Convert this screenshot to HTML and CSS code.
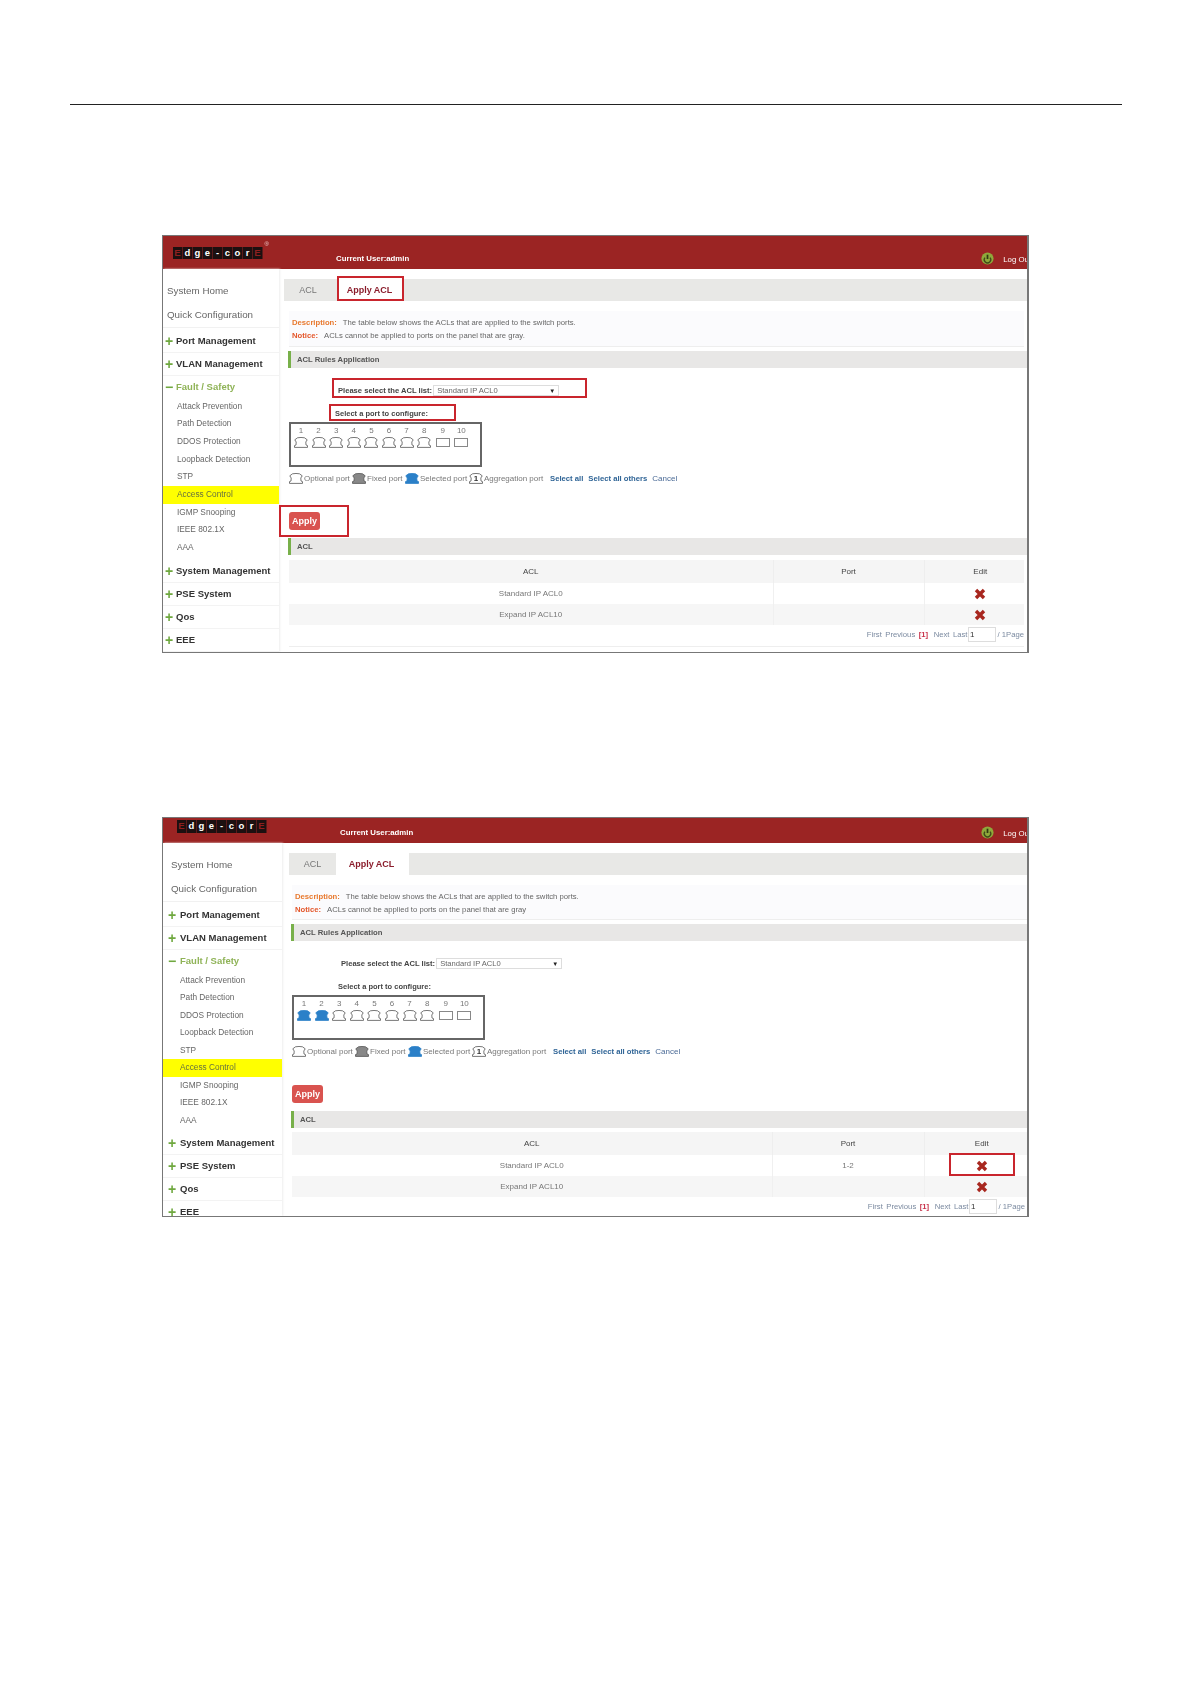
FILE: index.html
```html
<!DOCTYPE html>
<html lang="en">
<head>
<meta charset="utf-8">
<title>Apply ACL</title>
<link rel="stylesheet" href="styles.css">
</head>
<body>
<svg class="defs" width="0" height="0" aria-hidden="true">
  <symbol id="port" viewBox="0 0 14 11"><path d="M3.5 .8 Q7 .1 10.5 .8 L13.2 2.8 L11.8 5 L12 8 L13.5 8.6 V10.4 H.5 V8.6 L2 8 L2.2 5 L.8 2.8 Z"/></symbol>
  <symbol id="cross" viewBox="0 0 12 12"><path d="M2 2 L10 10 M10 2 L2 10"/></symbol>
  <symbol id="power" viewBox="0 0 12 12"><circle cx="6" cy="6" r="5.6" fill="#8fa83b"/><path d="M6 2.5 V6.5" stroke="#2f3a12" stroke-width="1.6"/><path d="M3.6 5.2 A3 3 0 1 0 8.4 5.2" fill="none" stroke="#3f4a18" stroke-width="1.2"/></symbol>
</svg>
<main class="page">
  <hr class="rule">

  <section class="shot shot-one">
    <header class="top">
      <div class="logo"><span class="red">E</span><span>d</span><span>g</span><span>e</span><span>-</span><span>c</span><span>o</span><span>r</span><span class="red">E</span><i class="reg">®</i></div>
      <div class="user">Current User:admin</div>
      <div class="logout"><svg class="power"><use href="#power"/></svg><span>Log Out</span></div>
    </header>
    <div class="body">
      <nav class="nav">
        <a class="plain">System Home</a>
        <a class="plain second">Quick Configuration</a>
        <a class="group first"><b>+</b>Port Management</a>
        <a class="group"><b>+</b>VLAN Management</a>
        <a class="group open"><b>−</b>Fault / Safety</a>
        <a class="sub">Attack Prevention</a>
        <a class="sub">Path Detection</a>
        <a class="sub">DDOS Protection</a>
        <a class="sub">Loopback Detection</a>
        <a class="sub">STP</a>
        <a class="sub active">Access Control</a>
        <a class="sub">IGMP Snooping</a>
        <a class="sub">IEEE 802.1X</a>
        <a class="sub">AAA</a>
        <a class="group after"><b>+</b>System Management</a>
        <a class="group"><b>+</b>PSE System</a>
        <a class="group"><b>+</b>Qos</a>
        <a class="group"><b>+</b>EEE</a>
      </nav>
      <div class="main">
        <div class="tabs"><span class="tab">ACL</span><span class="tab on">Apply ACL</span></div>
        <div class="desc">
          <p><b class="d">Description:</b>The table below shows the ACLs that are applied to the switch ports.</p>
          <p><b class="n">Notice:</b>ACLs cannot be applied to ports on the panel that are gray.</p>
        </div>
        <h3 class="bar rules">ACL Rules Application</h3>
        <div class="select-row"><span>Please select the ACL list:</span><div class="select">Standard IP ACL0<i>▼</i></div></div>
        <div class="port-label">Select a port to configure:</div>
        <div class="panel">
          <div class="pt"><span>1</span><svg class="p opt"><use href="#port"/></svg></div>
          <div class="pt"><span>2</span><svg class="p opt"><use href="#port"/></svg></div>
          <div class="pt"><span>3</span><svg class="p opt"><use href="#port"/></svg></div>
          <div class="pt"><span>4</span><svg class="p opt"><use href="#port"/></svg></div>
          <div class="pt"><span>5</span><svg class="p opt"><use href="#port"/></svg></div>
          <div class="pt"><span>6</span><svg class="p opt"><use href="#port"/></svg></div>
          <div class="pt"><span>7</span><svg class="p opt"><use href="#port"/></svg></div>
          <div class="pt"><span>8</span><svg class="p opt"><use href="#port"/></svg></div>
          <div class="pt sfp"><span>9</span><em></em></div>
          <div class="pt sfp"><span>10</span><em></em></div>
        </div>
        <div class="legend">
          <svg class="p opt"><use href="#port"/></svg><span class="lt w1">Optional port</span>
          <svg class="p fix"><use href="#port"/></svg><span class="lt w2">Fixed port</span>
          <svg class="p sel"><use href="#port"/></svg><span class="lt w3">Selected port</span>
          <span class="agg"><svg class="p opt"><use href="#port"/></svg><b>1</b></span><span class="lt w4">Aggregation port</span>
          <a class="lk strong">Select all</a><a class="lk strong">Select all others</a><a class="lk">Cancel</a>
        </div>
        <button class="apply" type="button">Apply</button>
        <h3 class="bar acl">ACL</h3>
        <table class="grid">
          <thead><tr><th class="c1">ACL</th><th class="c2">Port</th><th class="c3">Edit</th></tr></thead>
          <tbody>
            <tr><td>Standard IP ACL0</td><td></td><td class="c3"><svg class="x"><use href="#cross"/></svg></td></tr>
            <tr class="alt"><td>Expand IP ACL10</td><td></td><td class="c3"><svg class="x"><use href="#cross"/></svg></td></tr>
          </tbody>
        </table>
        <div class="pager"><span>First</span><span>Previous</span><b>[1]</b><span>Next</span><span>Last</span><input class="pg" value="1" aria-label="Page"><span>/ 1Page</span></div>
      </div>
    </div>
    <span class="mark m-tab"></span><span class="mark m-select"></span><span class="mark m-port"></span><span class="mark m-apply"></span>
  </section>

  <section class="shot shot-two">
    <header class="top">
      <div class="logo"><span class="red">E</span><span>d</span><span>g</span><span>e</span><span>-</span><span>c</span><span>o</span><span>r</span><span class="red">E</span></div>
      <div class="user">Current User:admin</div>
      <div class="logout"><svg class="power"><use href="#power"/></svg><span>Log Out</span></div>
    </header>
    <div class="body">
      <nav class="nav">
        <a class="plain">System Home</a>
        <a class="plain second">Quick Configuration</a>
        <a class="group first"><b>+</b>Port Management</a>
        <a class="group"><b>+</b>VLAN Management</a>
        <a class="group open"><b>−</b>Fault / Safety</a>
        <a class="sub">Attack Prevention</a>
        <a class="sub">Path Detection</a>
        <a class="sub">DDOS Protection</a>
        <a class="sub">Loopback Detection</a>
        <a class="sub">STP</a>
        <a class="sub active">Access Control</a>
        <a class="sub">IGMP Snooping</a>
        <a class="sub">IEEE 802.1X</a>
        <a class="sub">AAA</a>
        <a class="group after"><b>+</b>System Management</a>
        <a class="group"><b>+</b>PSE System</a>
        <a class="group"><b>+</b>Qos</a>
        <a class="group"><b>+</b>EEE</a>
      </nav>
      <div class="main">
        <div class="tabs"><span class="tab">ACL</span><span class="tab on">Apply ACL</span></div>
        <div class="desc">
          <p><b class="d">Description:</b>The table below shows the ACLs that are applied to the switch ports.</p>
          <p><b class="n">Notice:</b>ACLs cannot be applied to ports on the panel that are gray</p>
        </div>
        <h3 class="bar rules">ACL Rules Application</h3>
        <div class="select-row"><span>Please select the ACL list:</span><div class="select">Standard IP ACL0<i>▼</i></div></div>
        <div class="port-label">Select a port to configure:</div>
        <div class="panel">
          <div class="pt"><span>1</span><svg class="p sel"><use href="#port"/></svg></div>
          <div class="pt"><span>2</span><svg class="p sel"><use href="#port"/></svg></div>
          <div class="pt"><span>3</span><svg class="p opt"><use href="#port"/></svg></div>
          <div class="pt"><span>4</span><svg class="p opt"><use href="#port"/></svg></div>
          <div class="pt"><span>5</span><svg class="p opt"><use href="#port"/></svg></div>
          <div class="pt"><span>6</span><svg class="p opt"><use href="#port"/></svg></div>
          <div class="pt"><span>7</span><svg class="p opt"><use href="#port"/></svg></div>
          <div class="pt"><span>8</span><svg class="p opt"><use href="#port"/></svg></div>
          <div class="pt sfp"><span>9</span><em></em></div>
          <div class="pt sfp"><span>10</span><em></em></div>
        </div>
        <div class="legend">
          <svg class="p opt"><use href="#port"/></svg><span class="lt w1">Optional port</span>
          <svg class="p fix"><use href="#port"/></svg><span class="lt w2">Fixed port</span>
          <svg class="p sel"><use href="#port"/></svg><span class="lt w3">Selected port</span>
          <span class="agg"><svg class="p opt"><use href="#port"/></svg><b>1</b></span><span class="lt w4">Aggregation port</span>
          <a class="lk strong">Select all</a><a class="lk strong">Select all others</a><a class="lk">Cancel</a>
        </div>
        <button class="apply" type="button">Apply</button>
        <h3 class="bar acl">ACL</h3>
        <table class="grid">
          <thead><tr><th class="c1">ACL</th><th class="c2">Port</th><th class="c3">Edit</th></tr></thead>
          <tbody>
            <tr><td>Standard IP ACL0</td><td>1-2</td><td class="c3"><svg class="x"><use href="#cross"/></svg></td></tr>
            <tr class="alt"><td>Expand IP ACL10</td><td></td><td class="c3"><svg class="x"><use href="#cross"/></svg></td></tr>
          </tbody>
        </table>
        <div class="pager"><span>First</span><span>Previous</span><b>[1]</b><span>Next</span><span>Last</span><input class="pg" value="1" aria-label="Page"><span>/ 1Page</span></div>
      </div>
    </div>
    <span class="mark m-x"></span>
  </section>
</main>
</body>
</html>
```

FILE: styles.css
```css
* { box-sizing: border-box; }
html, body { margin: 0; background: #fff; }
body { font-family: "Liberation Sans", Arial, sans-serif; color: #555; }
.defs { position: absolute; }
.page { height: 1684px; padding-top: 104px; overflow: hidden; }
.rule { margin: 0 69px 0 70px; border: 0; border-top: 1px solid #222; height: 1px; }

.shot {
  position: relative;
  margin-left: 162px;
  width: 867px;
  border: 1px solid #777;
  border-right-width: 2px;
  overflow: hidden;
  filter: blur(.35px);
  display: flex;
  flex-direction: column;
}
.shot-one { margin-top: 130px; height: 418px; --side: 116px; --tab-l: 5px; --in-l: 10px; --in-r: 3px; --logo-y: 11px; --user-y: 18px; --top: 33px; --desc: 36px; --c2: 151px; --c3: 100px; --logo-l: 10px; --user-l: 73px; --logo-h: 12px; --grid-t: 5px; --pad-r: 0px; --sub: 17.7px; --after: 3.5px; }
.shot-two { margin-top: 164px; height: 400px; --side: 119px; --tab-l: 7px; --in-l: 10px; --in-r: 0px; --logo-y: 2px; --user-y: 10px; --top: 25px; --desc: 35px; --c2: 152px; --c3: 103px; --logo-l: 14px; --user-l: 73px; --logo-h: 13px; --grid-t: 4px; --pad-r: 2px; --sub: 17.5px; --after: 2.5px; }

/* header */
.top { flex: none; height: var(--top); background: #9b2423; display: flex; align-items: flex-start; color: #fff; font-size: 7.8px; }
.logo { position: relative; display: flex; margin: var(--logo-y) 0 0 var(--logo-l); }
.logo span { width: 10px; height: var(--logo-h); background: #1c1010; color: #fff; border-right: 1px solid #5a1a1a; font: bold 9.5px/11px "Liberation Sans", sans-serif; text-align: center; }
.logo .red { color: #8e1f1f; }
.reg { position: absolute; right: -6px; top: -7px; color: #ecc; font: normal 6px/8px "Liberation Sans", sans-serif; }
.user { margin: var(--user-y) 0 0 var(--user-l); font-weight: bold; line-height: 9px; white-space: nowrap; }
.logout { margin: var(--user-y) -5px 0 auto; display: flex; align-items: center; gap: 9px; white-space: nowrap; line-height: 12px; transform: translateX(-1px); }
.power { width: 13px; height: 13px; margin-top: -3px; }

.body { flex: 1; display: flex; min-height: 0; }

/* sidebar */
.nav { flex: none; width: var(--side); padding-top: 10px; box-shadow: 1px 0 2px #eee; display: flex; flex-direction: column; }
.nav a { display: block; white-space: nowrap; }
.plain { height: 24px; line-height: 24px; padding-left: 4px; font-size: 9.8px; color: #666; }
.shot-two .plain { padding-left: 8px; }
.second { height: 25px; border-bottom: 1px solid #f1f1f1; }
.group { height: 23px; line-height: 22px; font-size: 9.5px; font-weight: bold; color: #333; padding-left: 13px; position: relative; border-bottom: 1px solid #f3f3f3; }
.shot-two .group { padding-left: 17px; }
.group b { position: absolute; left: 1px; top: 0; width: 10px; text-align: center; font-size: 14px; color: #6fa83f; }
.shot-two .group b { left: 4px; }
.first { margin-top: 1.5px; }
.after { margin-top: var(--after); }
.open { color: #8fb357; border-bottom: 0; height: 22.5px; }
.sub { height: var(--sub); line-height: var(--sub); padding-left: 14px; font-size: 8.3px; color: #666; }
.shot-two .sub { padding-left: 17px; }
.active { background: #ff0; color: #667040; }

/* main */
.main { flex: 1; min-width: 0; padding-top: 10px; display: flex; flex-direction: column; align-items: stretch; }
.tabs { margin-left: var(--tab-l); height: 22px; background: #e8e8e6; display: flex; flex: none; }
.tab { width: 48px; line-height: 22px; text-align: center; font-size: 9px; color: #777; }
.tab.on { width: 67px; padding-right: 2px; background: #fff; color: #8b1d2c; font-weight: bold; margin-left: 5px; }
.shot-two .tab { width: 47px; }
.shot-two .tab.on { width: 73px; margin-left: 0; }
.desc { flex: none; height: var(--desc); margin: 10px var(--in-r) 0 var(--in-l); background: #fbfbfd; border-bottom: 1px solid #eee; padding: 5px 0 0 3px; font-size: 7.7px; line-height: 13px; color: #666; }
.desc p { margin: 0; white-space: nowrap; }
.desc b { margin-right: 6px; }
.d { color: #e8792e; }
.n { color: #e4572b; }
.bar { flex: none; margin: 4px 0 0 calc(var(--in-l) - 1px); height: 17px; line-height: 17px; border-left: 3px solid #78b04a; background: #e8e7e6; padding-left: 6px; font-size: 7.7px; font-weight: bold; color: #555; }
.select-row { flex: none; margin: 16px 0 0 calc(var(--in-l) + 49px); height: 13px; display: flex; align-items: center; font-size: 7.6px; font-weight: bold; color: #444; white-space: nowrap; }
.select { margin-left: 1px; width: 126px; height: 11px; border: 1px solid #ddd; display: flex; justify-content: space-between; align-items: center; padding: 0 3px; font-weight: normal; color: #666; }
.select i { font-style: normal; font-size: 6px; color: #222; }
.port-label { flex: none; margin: 10px 0 0 calc(var(--in-l) + 46px); height: 13px; line-height: 13px; font-size: 7.5px; font-weight: bold; color: #444; }
.panel { flex: none; margin: 2px 0 0 var(--in-l); width: 193px; height: 45px; border: 2px solid #666; padding: 2px 0 0 3px; display: flex; gap: 3.6px; background: #fff; }
.pt { width: 14px; display: flex; flex-direction: column; align-items: center; font-size: 8px; line-height: 10px; color: #777; }
.pt span { height: 11px; }
.p { width: 14px; height: 11px; flex: none; stroke: #555; stroke-width: .8; }
.opt { fill: #fff; }
.fix { fill: #888; }
.sel { fill: #2b80c8; stroke: #2b80c8; }
.sfp { margin-left: 1px; }
.sfp em { display: block; width: 14px; height: 9px; margin-top: 1px; border: 1px solid #888; }
.legend { flex: none; margin: 6px 0 0 var(--in-l); height: 11px; display: flex; align-items: center; font-size: 8px; color: #777; white-space: nowrap; }
.lt { margin-left: 1px; }
.w1 { width: 48px; }
.w2 { width: 38px; }
.w3 { width: 49px; }
.w4 { width: 66px; }
.agg { position: relative; width: 14px; height: 11px; display: block; }
.agg b { position: absolute; left: 0; right: 0; top: 0; text-align: center; font-size: 8px; line-height: 11px; color: #333; }
.lk { color: #4a6a96; margin-right: 6px; }
.strong { color: #2f6496; font-size: 7.7px; font-weight: bold; margin-right: 5px; }
.apply { flex: none; align-self: flex-start; margin: 28px 0 0 var(--in-l); width: 31px; height: 18px; padding: 0; border: 0; border-radius: 3px; background: #d9534f; color: #fff; font: bold 9px/18px "Liberation Sans", sans-serif; }
.acl { margin-top: 8px; }
.grid { flex: none; margin: var(--grid-t) var(--in-r) 0 var(--in-l); width: calc(100% - var(--in-l) - var(--in-r)); border-collapse: collapse; table-layout: fixed; font-size: 8px; color: #777; }
.grid th { height: 23px; padding: 0; background: #f5f5f5; font-weight: normal; color: #444; border-left: 1px solid #eee; }
.grid td { height: 21px; padding: 0; text-align: center; background: #fff; border-left: 1px solid #f0f0f0; }
.grid th:first-child, .grid td:first-child { border-left: 0; }
.grid .alt td { background: #f6f6f6; }
.c2 { width: var(--c2); }
.grid .c3 { width: var(--c3); padding-left: 12px; }
.x { width: 12px; height: 12px; display: inline-block; vertical-align: middle; fill: none; stroke: #a8271f; stroke-width: 3.4; }
.pager { flex: none; margin: 0 var(--in-r) 0 var(--in-l); padding: 0 var(--pad-r) 3px 0; height: 22px; display: flex; justify-content: flex-end; align-items: center; gap: 3.5px; font-size: 7.7px; color: #7b8aa0; border-bottom: 1px solid #eee; white-space: nowrap; }
.pager b { color: #c8324a; margin-right: 2px; }
.pg { width: 28px; height: 15px; margin: 0 -2px 0 -3px; padding: 0 1px; border: 1px solid #ddd; font: 8px "Liberation Sans", sans-serif; color: #333; }

/* red annotation boxes, drawn over the screenshot */
.mark { position: absolute; border: 2px solid #c9252d; }
.m-tab { left: 174px; top: 40px; width: 67px; height: 25px; }
.m-select { left: 169px; top: 142px; width: 255px; height: 20px; }
.m-port { left: 166px; top: 168px; width: 127px; height: 17px; }
.m-apply { left: 116px; top: 269px; width: 70px; height: 32px; }
.m-x { left: 786px; top: 335px; width: 66px; height: 23px; }
```
